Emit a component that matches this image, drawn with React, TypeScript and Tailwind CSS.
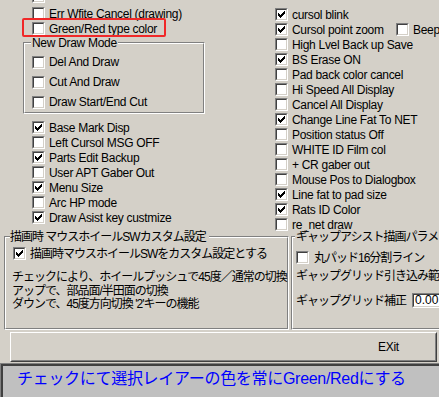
import React from "react";

const CHECK =
  "M6 0h1v1H6z M5 1h2v1H5z M0 2h1v1H0z M4 2h3v1H4z M0 3h2v1H0z M3 3h3v1H3z M0 4h5v1H0z M1 5h3v1H1z M2 6h1v1H2z";

function Box({ checked }: { checked?: boolean }) {
  return (
    <span className="block w-[13px] h-[13px] shrink-0 border border-t-[#808080] border-l-[#808080] border-r-white border-b-white">
      <span className="flex w-full h-full items-center justify-center bg-white border border-t-[#404040] border-l-[#404040] border-r-[#d4d0c8] border-b-[#d4d0c8]">
        {checked && (
          <svg width="7" height="7" viewBox="0 0 7 7" shapeRendering="crispEdges">
            <path d={CHECK} fill="#000" />
          </svg>
        )}
      </span>
    </span>
  );
}

function Row({
  checked,
  label,
  h = "h-[15px]",
  extra = "",
}: {
  checked?: boolean;
  label: string;
  h?: string;
  extra?: string;
}) {
  return (
    <div className={`flex items-center gap-[4px] whitespace-nowrap ${h} ${extra}`}>
      <Box checked={checked} />
      <span className="leading-[14px] tracking-[-0.3px]">{label}</span>
    </div>
  );
}

function Etched({
  className,
  title,
  titleClass,
  children,
}: {
  className: string;
  title: string;
  titleClass: string;
  children: React.ReactNode;
}) {
  return (
    <div className={`relative shrink-0 border border-t-[#808080] border-l-[#808080] border-r-white border-b-white ${className}`}>
      <div className="h-full border border-t-white border-l-white border-r-[#808080] border-b-[#808080]">
        <span className={`absolute top-[-5px] h-[10px] bg-[#d4d0c8] leading-[10px] whitespace-nowrap ${titleClass}`}>
          {title}
        </span>
        {children}
      </div>
    </div>
  );
}

export default function App() {
  return (
    <div className="w-[439px] h-[397px] overflow-hidden bg-[#d4d0c8] text-black text-[12px] font-['Liberation_Sans','Noto_Sans_CJK_JP',sans-serif] flex flex-col">
      {/* top area */}
      <div className="h-[236px] shrink-0 flex">
        {/* left column */}
        <div className="w-[275px] shrink-0 flex flex-col">
          <div className="pl-[32px] mt-[-11px]">
            <Row label="" />
          </div>
          <div className="pl-[32px] mt-[2px]">
            <Row label="Err Wfite Cancel (drawing)" />
          </div>
          <div className="relative pl-[32px]">
            <Row label="Green/Red type color" />
            <div className="absolute left-[22px] top-[-3px] w-[144px] h-[19px] border-2 border-[#f02828] rounded-[2px]" />
          </div>
          <Etched
            className="ml-[23px] mt-[6px] w-[182px] h-[72px]"
            title="New Draw Mode"
            titleClass="left-[7px] px-[1px] tracking-[-0.3px]"
          >
            <div className="pl-[7px] pt-[8px] flex flex-col">
              <Row label="Del And Draw" h="h-[20px]" />
              <Row label="Cut And Draw" h="h-[20px]" />
              <Row label="Draw Start/End Cut" h="h-[20px]" />
            </div>
          </Etched>
          <div className="pl-[32px] mt-[6px] flex flex-col">
            <Row checked label="Base Mark Disp" />
            <Row label="Left Cursol MSG OFF" />
            <Row checked label="Parts Edit Backup" />
            <Row label="User APT Gaber Out" />
            <Row checked label="Menu Size" />
            <Row label="Arc HP mode" />
            <Row checked label="Draw Asist key custmize" />
          </div>
        </div>
        {/* right column */}
        <div className="flex flex-col pt-[7px]">
          <Row checked label="cursol blink" />
          <div className="flex items-center h-[15px] whitespace-nowrap">
            <div className="w-[121px] shrink-0 flex items-center gap-[4px]">
              <Box checked />
              <span className="leading-[14px] tracking-[-0.3px]">Cursol point zoom</span>
            </div>
            <Box />
            <span className="ml-[4px] leading-[14px] tracking-[-0.3px]">Beep</span>
          </div>
          <Row label="High Lvel Back up Save" />
          <Row checked label="BS Erase ON" />
          <Row label="Pad back color cancel" />
          <Row label="Hi Speed All Display" />
          <Row label="Cancel All Display" />
          <Row checked label="Change Line Fat To NET" />
          <Row label="Position status Off" />
          <Row label="WHITE ID Film col" />
          <Row label="+ CR gaber out" />
          <Row label="Mouse Pos to Dialogbox" />
          <Row checked label="Line fat to pad size" />
          <Row checked label="Rats ID Color" />
          <Row label="re_net draw" />
        </div>
      </div>

      {/* group boxes */}
      <div className="h-[94px] shrink-0 flex">
        <Etched
          className="ml-[4px] w-[285px] h-[94px]"
          title="描画時 マウスホイールSWカスタム設定"
          titleClass="left-[5px] tracking-[-1px] pr-[3px]"
        >
          <div className="pt-[8px] flex flex-col">
            <div className="pl-[7px]">
              <div className="flex items-center gap-[4px] h-[15px] whitespace-nowrap">
                <Box checked />
                <span className="leading-[14px] tracking-[-1px]">描画時マウスホイールSWをカスタム設定とする</span>
              </div>
            </div>
            <div className="pl-[6px] mt-[10px] flex flex-col tracking-[-1px] whitespace-nowrap">
              <span className="h-[13.5px] leading-[13.5px]">チェックにより、ホイールプッシュで45度／通常の切換</span>
              <span className="h-[13.5px] leading-[13.5px]">アップで、部品面/半田面の切換</span>
              <span className="h-[13.5px] leading-[13.5px]">ダウンで、45度方向切換 &#39;2&#39;キーの機能</span>
            </div>
          </div>
        </Etched>
        <Etched
          className="ml-[2px] w-[200px] h-[94px]"
          title="ギャップアシスト描画パラメータ"
          titleClass="left-[3px] tracking-[-1px] px-[1px]"
        >
          <div className="pl-[3px] pt-[12px] flex flex-col tracking-[-1px] whitespace-nowrap">
            <div className="flex items-center gap-[5px] h-[15px]">
              <Box />
              <span className="leading-[14px]">丸パッド16分割ライン</span>
            </div>
            <span className="mt-[4px] h-[14px] leading-[14px]">ギャップグリッド引き込み範囲</span>
            <div className="mt-[10px] flex items-center h-[15px]">
              <span className="w-[116px] shrink-0 leading-[14px]">ギャップグリッド補正</span>
              <div className="h-[15px] w-[60px] border border-t-[#808080] border-l-[#808080] border-r-white border-b-white">
                <div className="h-full bg-white border border-t-[#404040] border-l-[#404040] border-r-[#d4d0c8] border-b-[#d4d0c8] pl-[1px] leading-[11px] tracking-normal">
                  0.00
                </div>
              </div>
            </div>
          </div>
        </Etched>
      </div>

      {/* Exit button */}
      <div className="mt-[2px] ml-[10px] w-[427px] h-[30px] shrink-0 border border-t-white border-l-white border-r-[#404040] border-b-[#404040]">
        <div className="h-full flex items-center pl-[366px] border border-t-[#d4d0c8] border-l-[#d4d0c8] border-r-[#808080] border-b-[#808080] tracking-[-0.3px]">
          EXit
        </div>
      </div>

      {/* status panel */}
      <div className="mt-[1px] w-[450px] h-[40px] shrink-0 border border-t-[#808080] border-l-[#808080]">
        <div className="h-full bg-[#c0c0c0] border-2 border-t-[#404040] border-l-[#404040] border-r-0 border-b-0 pl-[14px] pt-[1px]">
          <span className="text-[16px] leading-[20px] text-[#0000ff] whitespace-nowrap font-['Noto_Sans_CJK_JP',sans-serif] tracking-[-0.3px]">
            チェックにて選択レイアーの色を常に<span className="font-['Liberation_Sans',sans-serif]">Green/Red</span>にする
          </span>
        </div>
      </div>
    </div>
  );
}
